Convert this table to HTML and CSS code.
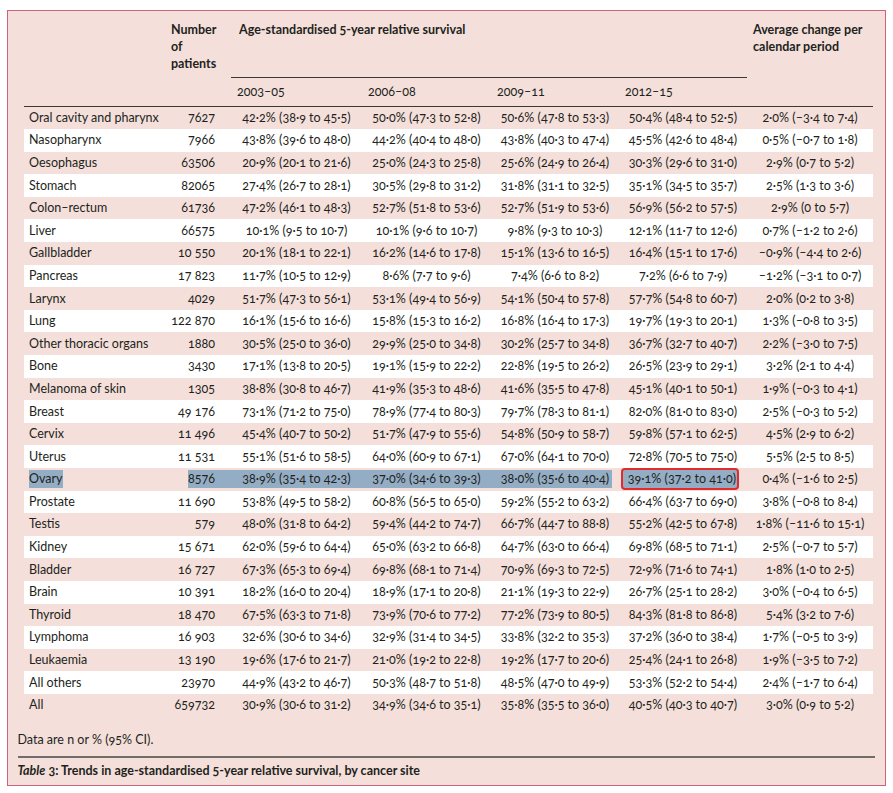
FILE: index.html
```html
<!DOCTYPE html>
<html lang="en">
<head>
<meta charset="utf-8">
<title>Table 3</title>
<link rel="stylesheet" href="styles.css">
</head>
<body>
<div class="frame">
  <table class="data">
    <colgroup>
      <col class="c-site"><col class="c-num"><col class="c-y1"><col class="c-y2"><col class="c-y3"><col class="c-y4"><col class="c-avg">
    </colgroup>
    <thead>
      <tr class="h1">
        <th rowspan="2" class="h-site"></th>
        <th rowspan="2" class="h-num">Number<br>of<br>patients</th>
        <th colspan="4" class="h-group">Age-standardised 5-year relative survival</th>
        <th rowspan="2" class="h-avg">Average change per<br>calendar period</th>
      </tr>
      <tr class="h2">
        <th class="h-year">2003–05</th>
        <th class="h-year">2006–08</th>
        <th class="h-year">2009–11</th>
        <th class="h-year">2012–15</th>
      </tr>
    </thead>
    <tbody>
      <tr><td class="site">Oral cavity and pharynx</td><td class="num">7627</td><td>42·2% (38·9 to 45·5)</td><td>50·0% (47·3 to 52·8)</td><td>50·6% (47·8 to 53·3)</td><td>50·4% (48·4 to 52·5)</td><td>2·0% (–3·4 to 7·4)</td></tr>
      <tr><td class="site">Nasopharynx</td><td class="num">7966</td><td>43·8% (39·6 to 48·0)</td><td>44·2% (40·4 to 48·0)</td><td>43·8% (40·3 to 47·4)</td><td>45·5% (42·6 to 48·4)</td><td>0·5% (–0·7 to 1·8)</td></tr>
      <tr><td class="site">Oesophagus</td><td class="num">63506</td><td>20·9% (20·1 to 21·6)</td><td>25·0% (24·3 to 25·8)</td><td>25·6% (24·9 to 26·4)</td><td>30·3% (29·6 to 31·0)</td><td>2·9% (0·7 to 5·2)</td></tr>
      <tr><td class="site">Stomach</td><td class="num">82065</td><td>27·4% (26·7 to 28·1)</td><td>30·5% (29·8 to 31·2)</td><td>31·8% (31·1 to 32·5)</td><td>35·1% (34·5 to 35·7)</td><td>2·5% (1·3 to 3·6)</td></tr>
      <tr><td class="site">Colon–rectum</td><td class="num">61736</td><td>47·2% (46·1 to 48·3)</td><td>52·7% (51·8 to 53·6)</td><td>52·7% (51·9 to 53·6)</td><td>56·9% (56·2 to 57·5)</td><td>2·9% (0 to 5·7)</td></tr>
      <tr><td class="site">Liver</td><td class="num">66575</td><td>10·1% (9·5 to 10·7)</td><td>10·1% (9·6 to 10·7)</td><td>9·8% (9·3 to 10·3)</td><td>12·1% (11·7 to 12·6)</td><td>0·7% (–1·2 to 2·6)</td></tr>
      <tr><td class="site">Gallbladder</td><td class="num">10 550</td><td>20·1% (18·1 to 22·1)</td><td>16·2% (14·6 to 17·8)</td><td>15·1% (13·6 to 16·5)</td><td>16·4% (15·1 to 17·6)</td><td>–0·9% (–4·4 to 2·6)</td></tr>
      <tr><td class="site">Pancreas</td><td class="num">17 823</td><td>11·7% (10·5 to 12·9)</td><td>8·6% (7·7 to 9·6)</td><td>7·4% (6·6 to 8·2)</td><td>7·2% (6·6 to 7·9)</td><td>–1·2% (–3·1 to 0·7)</td></tr>
      <tr><td class="site">Larynx</td><td class="num">4029</td><td>51·7% (47·3 to 56·1)</td><td>53·1% (49·4 to 56·9)</td><td>54·1% (50·4 to 57·8)</td><td>57·7% (54·8 to 60·7)</td><td>2·0% (0·2 to 3·8)</td></tr>
      <tr><td class="site">Lung</td><td class="num">122 870</td><td>16·1% (15·6 to 16·6)</td><td>15·8% (15·3 to 16·2)</td><td>16·8% (16·4 to 17·3)</td><td>19·7% (19·3 to 20·1)</td><td>1·3% (–0·8 to 3·5)</td></tr>
      <tr><td class="site">Other thoracic organs</td><td class="num">1880</td><td>30·5% (25·0 to 36·0)</td><td>29·9% (25·0 to 34·8)</td><td>30·2% (25·7 to 34·8)</td><td>36·7% (32·7 to 40·7)</td><td>2·2% (–3·0 to 7·5)</td></tr>
      <tr><td class="site">Bone</td><td class="num">3430</td><td>17·1% (13·8 to 20·5)</td><td>19·1% (15·9 to 22·2)</td><td>22·8% (19·5 to 26·2)</td><td>26·5% (23·9 to 29·1)</td><td>3·2% (2·1 to 4·4)</td></tr>
      <tr><td class="site">Melanoma of skin</td><td class="num">1305</td><td>38·8% (30·8 to 46·7)</td><td>41·9% (35·3 to 48·6)</td><td>41·6% (35·5 to 47·8)</td><td>45·1% (40·1 to 50·1)</td><td>1·9% (–0·3 to 4·1)</td></tr>
      <tr><td class="site">Breast</td><td class="num">49 176</td><td>73·1% (71·2 to 75·0)</td><td>78·9% (77·4 to 80·3)</td><td>79·7% (78·3 to 81·1)</td><td>82·0% (81·0 to 83·0)</td><td>2·5% (–0·3 to 5·2)</td></tr>
      <tr><td class="site">Cervix</td><td class="num">11 496</td><td>45·4% (40·7 to 50·2)</td><td>51·7% (47·9 to 55·6)</td><td>54·8% (50·9 to 58·7)</td><td>59·8% (57·1 to 62·5)</td><td>4·5% (2·9 to 6·2)</td></tr>
      <tr><td class="site">Uterus</td><td class="num">11 531</td><td>55·1% (51·6 to 58·5)</td><td>64·0% (60·9 to 67·1)</td><td>67·0% (64·1 to 70·0)</td><td>72·8% (70·5 to 75·0)</td><td>5·5% (2·5 to 8·5)</td></tr>
      <tr class="selected"><td class="site"><span class="sel">Ovary</span></td><td class="num num-sel"><span class="sel-num">8576</span></td><td class="selcell">38·9% (35·4 to 42·3)</td><td class="selcell">37·0% (34·6 to 39·3)</td><td class="selcell selcell-part">38·0% (35·6 to 40·4)</td><td><span class="mark">39·1% (37·2 to 41·0)</span></td><td>0·4% (–1·6 to 2·5)</td></tr>
      <tr><td class="site">Prostate</td><td class="num">11 690</td><td>53·8% (49·5 to 58·2)</td><td>60·8% (56·5 to 65·0)</td><td>59·2% (55·2 to 63·2)</td><td>66·4% (63·7 to 69·0)</td><td>3·8% (–0·8 to 8·4)</td></tr>
      <tr><td class="site">Testis</td><td class="num">579</td><td>48·0% (31·8 to 64·2)</td><td>59·4% (44·2 to 74·7)</td><td>66·7% (44·7 to 88·8)</td><td>55·2% (42·5 to 67·8)</td><td>1·8% (–11·6 to 15·1)</td></tr>
      <tr><td class="site">Kidney</td><td class="num">15 671</td><td>62·0% (59·6 to 64·4)</td><td>65·0% (63·2 to 66·8)</td><td>64·7% (63·0 to 66·4)</td><td>69·8% (68·5 to 71·1)</td><td>2·5% (–0·7 to 5·7)</td></tr>
      <tr><td class="site">Bladder</td><td class="num">16 727</td><td>67·3% (65·3 to 69·4)</td><td>69·8% (68·1 to 71·4)</td><td>70·9% (69·3 to 72·5)</td><td>72·9% (71·6 to 74·1)</td><td>1·8% (1·0 to 2·5)</td></tr>
      <tr><td class="site">Brain</td><td class="num">10 391</td><td>18·2% (16·0 to 20·4)</td><td>18·9% (17·1 to 20·8)</td><td>21·1% (19·3 to 22·9)</td><td>26·7% (25·1 to 28·2)</td><td>3·0% (–0·4 to 6·5)</td></tr>
      <tr><td class="site">Thyroid</td><td class="num">18 470</td><td>67·5% (63·3 to 71·8)</td><td>73·9% (70·6 to 77·2)</td><td>77·2% (73·9 to 80·5)</td><td>84·3% (81·8 to 86·8)</td><td>5·4% (3·2 to 7·6)</td></tr>
      <tr><td class="site">Lymphoma</td><td class="num">16 903</td><td>32·6% (30·6 to 34·6)</td><td>32·9% (31·4 to 34·5)</td><td>33·8% (32·2 to 35·3)</td><td>37·2% (36·0 to 38·4)</td><td>1·7% (–0·5 to 3·9)</td></tr>
      <tr><td class="site">Leukaemia</td><td class="num">13 190</td><td>19·6% (17·6 to 21·7)</td><td>21·0% (19·2 to 22·8)</td><td>19·2% (17·7 to 20·6)</td><td>25·4% (24·1 to 26·8)</td><td>1·9% (–3·5 to 7·2)</td></tr>
      <tr><td class="site">All others</td><td class="num">23970</td><td>44·9% (43·2 to 46·7)</td><td>50·3% (48·7 to 51·8)</td><td>48·5% (47·0 to 49·9)</td><td>53·3% (52·2 to 54·4)</td><td>2·4% (–1·7 to 6·4)</td></tr>
      <tr><td class="site">All</td><td class="num">659732</td><td>30·9% (30·6 to 31·2)</td><td>34·9% (34·6 to 35·1)</td><td>35·8% (35·5 to 36·0)</td><td>40·5% (40·3 to 40·7)</td><td>3·0% (0·9 to 5·2)</td></tr>
    </tbody>
  </table>
  <p class="note">Data are n or % (95% CI).</p>
  <p class="caption"><em>Table</em> 3: Trends in age-standardised 5-year relative survival, by cancer site</p>
</div>
</body>
</html>
```

FILE: styles.css
```css
html, body {
  margin: 0;
  padding: 0;
  background: #ffffff;
}

body {
  font-family: "Lato", "Noto Sans", sans-serif;
  font-size: 12.5px;
  color: #231f20;
  font-variant-numeric: oldstyle-nums tabular-nums;
}

.frame {
  margin: 10px 0 0 7px;
  width: 879px;
  height: 776px;
  box-sizing: border-box;
  border: 1.5px solid #d0617c;
  background: #f4dfdb;
  padding: 8px 10px 0 9.5px;
}

.data {
  margin: 0 1px 0 6.5px;
  width: 849px;
  border-collapse: collapse;
  table-layout: fixed;
}

.c-site { width: 141px; }
.c-num { width: 66px; }
.c-y1 { width: 131px; }
.c-y2 { width: 129px; }
.c-y3 { width: 128px; }
.c-y4 { width: 128px; }
.c-avg { width: 126px; }

th {
  font-weight: 700;
  text-align: left;
  vertical-align: top;
  line-height: 17px;
  padding: 2px 0 0 6px;
}

.h1 th { height: 56px; }
.h1 th[rowspan] { border-bottom: 1px solid #3b3838; }
.h-group {
  padding-left: 8px;
  border-bottom: 1px solid #3b3838;
}
.h2 th {
  font-weight: 400;
  vertical-align: middle;
  height: 27.5px;
  padding: 0 0 0 6px;
  border-bottom: 1px solid #3b3838;
}

td {
  height: 22.6px;
  padding: 0;
  line-height: 16px;
  text-align: center;
  vertical-align: middle;
  white-space: nowrap;
}

tbody tr:nth-child(even) { background: #ffffff; }

td.site {
  text-align: left;
  padding-left: 5px;
}

td.num {
  text-align: right;
  padding-right: 16px;
}

/* selection highlight on the Ovary row */
.sel {
  background: #93adc5;
  display: inline-block;
  line-height: 18px;
}

td.num-sel { padding-right: 0; }
.sel-num {
  display: inline-block;
  background: #93adc5;
  line-height: 18px;
  padding-right: 16px;
}

.selcell {
  background: linear-gradient(#93adc5, #93adc5) no-repeat left center;
  background-size: 100% 18px;
}
.selcell-part {
  background-size: 121px 18px;
}

.mark {
  display: inline-block;
  box-sizing: border-box;
  height: 22px;
  line-height: 18px;
  padding: 0 1px 0 5px;
  margin-right: 6px;
  background: #93adc5;
  border: 2px solid #e42a2a;
  border-radius: 4px;
}

.note {
  margin: 14.5px 0 0 0;
  line-height: 17px;
}

.caption {
  margin: 8px 0 0 0;
  padding-top: 4px;
  border-top: 2px solid #716c6a;
  font-weight: 700;
  line-height: 17px;
}
```
